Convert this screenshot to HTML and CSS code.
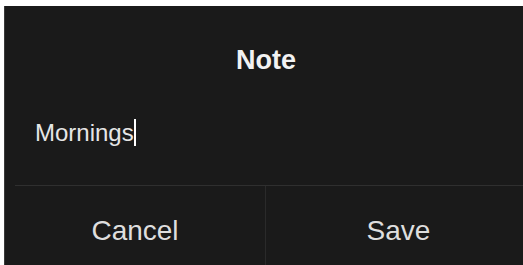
FILE: index.html
```html
<!DOCTYPE html>
<html>
<head>
<meta charset="utf-8">
<link rel="stylesheet" href="styles.css">
</head>
<body>
<div class="dialog">
  <div class="title">Note</div>
  <div class="field"><span class="value">Mornings</span><span class="caret"></span></div>
  <div class="actions">
    <div class="btn cancel">Cancel</div>
    <div class="btn save">Save</div>
  </div>
</div>
</body>
</html>
```

FILE: styles.css
```css
html, body {
  margin: 0;
  padding: 0;
  background: #ffffff;
  height: 100%;
}
body {
  font-family: "Liberation Sans", Arial, sans-serif;
  padding: 6px 0 0 4px;
  box-sizing: border-box;
}
.dialog {
  background: #1a1a1a;
  height: 259px;
  display: flex;
  flex-direction: column;
  border-left: 1px solid #3a3a3a;
}
.title {
  height: 104px;
  display: flex;
  align-items: center;
  justify-content: center;
  color: #f2f2f2;
  font-weight: bold;
  font-size: 27px;
  padding-left: 4px;
  padding-top: 4px;
  box-sizing: border-box;
}
.field {
  height: 75px;
  display: flex;
  align-items: center;
  padding-left: 30px;
  color: #e6e6e6;
  font-size: 24px;
  padding-bottom: 30px;
  box-sizing: border-box;
}
.caret {
  display: inline-block;
  width: 2px;
  height: 27px;
  background: #ffffff;
}
.actions {
  flex: 1;
  display: flex;
  margin-left: 10px;
  border-top: 1px solid #2f2f2f;
}
.btn {
  flex: 1;
  display: flex;
  align-items: center;
  justify-content: center;
  color: #dedede;
  font-size: 28px;
  padding-top: 10px;
}
.cancel {
  border-right: 1px solid #2a2a2a;
  margin-left: -10px;
  flex: 0 0 260px;
}
.save {
  padding-left: 8px;
}
```
